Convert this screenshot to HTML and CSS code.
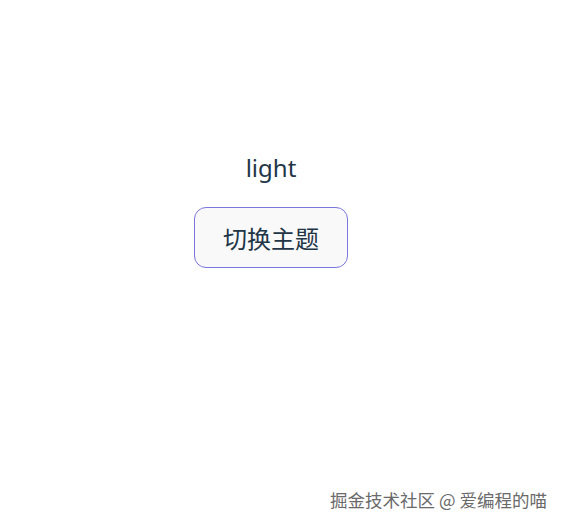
FILE: index.html
```html
<!DOCTYPE html>
<html lang="zh-CN">
<head>
    <meta charset="UTF-8">
    <meta name="viewport" content="width=device-width, initial-scale=1.0">
    <title>切换主题</title>
    <link rel="stylesheet" href="styles.css">
</head>
<body>

<div class="app">
    <div class="theme-name">light</div>
    <button class="theme-btn" type="button">切换主题</button>
</div>

<div class="watermark">掘金技术社区 @ 爱编程的喵</div>

</body>
</html>
```

FILE: styles.css
```css
body {
    font-family: "Noto Sans", "Noto Sans CJK SC", sans-serif;
    background-color: #fff;
    color: #213547;
    margin: 0;
    padding: 0;
    height: 526px;
    position: relative;
}

.app {
    width: 542px;
    padding-top: 150px;
    display: flex;
    flex-direction: column;
    align-items: center;
}

.theme-name {
    font-size: 24px;
    line-height: 36px;
}

.theme-btn {
    margin-top: 21px;
    font-family: "Noto Sans CJK SC", sans-serif;
    font-size: 24px;
    line-height: 33px;
    padding: 13px 28px;
    color: #213547;
    background-color: #f9f9f9;
    border: 1px solid #7a76de;
    border-radius: 12px;
    cursor: pointer;
}

.watermark {
    position: absolute;
    right: 15px;
    bottom: 14px;
    font-family: "Noto Sans CJK SC", sans-serif;
    font-size: 17.5px;
    line-height: 24px;
    color: #6a6a6a;
    text-shadow: 0 0 2px #fff, 0 0 1px #fff;
}
```
